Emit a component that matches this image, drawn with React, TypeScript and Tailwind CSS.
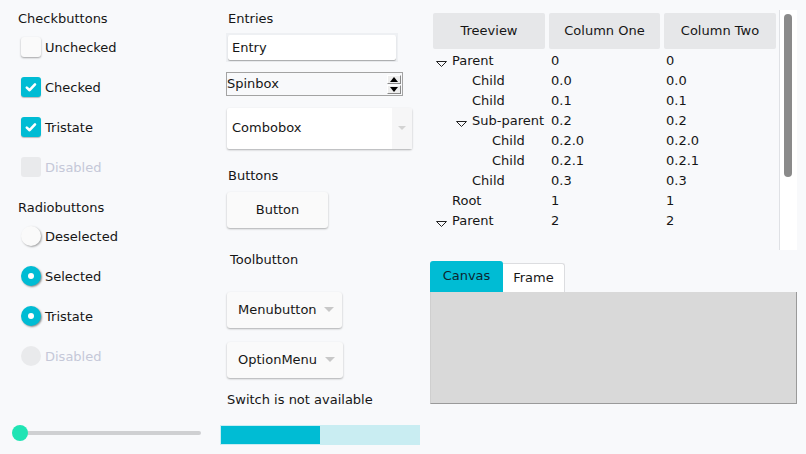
import React from "react";

const TXT = "text-[#161616]";

function CheckBox({ kind }: { kind: "off" | "on" | "dis" }) {
  if (kind === "on")
    return (
      <div className="w-5 h-5 rounded-[3px] bg-[#00bcd4] shadow-[0_1px_1px_rgba(0,0,0,0.25)] flex items-center justify-center">
        <svg width="20" height="20" viewBox="0 0 20 20">
          <path d="M5.8 10.6 L8.6 13.2 L14 7.4" fill="none" stroke="white" strokeWidth="2.6" strokeLinecap="round" strokeLinejoin="round" />
        </svg>
      </div>
    );
  if (kind === "dis") return <div className="w-5 h-5 rounded-[3px] bg-[#e9eaec]" />;
  return <div className="w-5 h-5 rounded-[3px] bg-[#fafafa] shadow-[0_1px_2px_rgba(0,0,0,0.35)]" />;
}

function Radio({ kind }: { kind: "off" | "on" | "dis" }) {
  if (kind === "on")
    return (
      <div className="w-5 h-5 rounded-full bg-[#00bcd4] shadow-[1px_1px_2px_rgba(0,0,0,0.45)] flex items-center justify-center">
        <div className="w-[6px] h-[6px] rounded-full bg-white" />
      </div>
    );
  if (kind === "dis") return <div className="w-5 h-5 rounded-full bg-[#e9eaec]" />;
  return <div className="w-5 h-5 rounded-full bg-[#fafafa] shadow-[1px_1px_2px_rgba(0,0,0,0.35)]" />;
}

function Row({ children, label, dis }: { children: React.ReactNode; label: string; dis?: boolean }) {
  return (
    <div className="h-10 flex items-center pl-[21px] gap-[4px]">
      {children}
      <span className={`pt-[1px] ${dis ? "text-[#c5c8d8]" : TXT}`}>{label}</span>
    </div>
  );
}

function DownArrow({ color = "#c8c8c8" }: { color?: string }) {
  return (
    <svg width="10" height="6" viewBox="0 0 10 6">
      <polygon points="0,0 10,0 5,5" fill={color} />
    </svg>
  );
}

function TreeArrow() {
  return (
    <svg width="17" height="20" viewBox="0 0 17 20">
      <polygon points="1.5,10.5 11.5,10.5 6.5,15.5" fill="none" stroke="#222" strokeWidth="1" />
    </svg>
  );
}

const rows = [
  { l: 0, a: true, n: "Parent", v: "0" },
  { l: 1, a: false, n: "Child", v: "0.0" },
  { l: 1, a: false, n: "Child", v: "0.1" },
  { l: 1, a: true, n: "Sub-parent", v: "0.2" },
  { l: 2, a: false, n: "Child", v: "0.2.0" },
  { l: 2, a: false, n: "Child", v: "0.2.1" },
  { l: 1, a: false, n: "Child", v: "0.3" },
  { l: 0, a: false, n: "Root", v: "1" },
  { l: 0, a: true, n: "Parent", v: "2" },
];

const indent = ["pl-[5px]", "pl-[25px]", "pl-[45px]"];

export default function App() {
  return (
    <div
      className={`w-[806px] h-[454px] bg-[#f8f9fb] flex text-[13px] leading-4 overflow-hidden ${TXT}`}
      style={{ fontFamily: "'DejaVu Sans', sans-serif" }}
    >
      {/* Column 1 */}
      <div className="w-[220px] shrink-0 flex flex-col pt-[11px]">
        <div className="h-4 pl-[18px]">Checkbuttons</div>
        <div>
          <Row label="Unchecked"><CheckBox kind="off" /></Row>
          <Row label="Checked"><CheckBox kind="on" /></Row>
          <Row label="Tristate"><CheckBox kind="on" /></Row>
          <Row label="Disabled" dis><CheckBox kind="dis" /></Row>
        </div>
        <div className="h-4 pl-[18px] mt-[13px]">Radiobuttons</div>
        <div>
          <Row label="Deselected"><Radio kind="off" /></Row>
          <Row label="Selected"><Radio kind="on" /></Row>
          <Row label="Tristate"><Radio kind="on" /></Row>
          <Row label="Disabled" dis><Radio kind="dis" /></Row>
        </div>
        <div className="mt-[49px] h-4 flex items-center pl-[12px]">
          <div className="relative w-[190px] h-4 flex items-center">
            <div className="ml-[8px] w-[181px] h-[4px] rounded-full bg-[#cfd0d2]" />
            <div className="absolute left-0 top-0 w-4 h-4 rounded-full bg-[#20e4b4]" />
          </div>
        </div>
      </div>

      {/* Column 2 */}
      <div className="w-[210px] shrink-0 flex flex-col pt-[11px]">
        <div className="h-4 pl-[8px]">Entries</div>
        <div className="mt-[6px] ml-[6px] w-[172px] h-[29px] p-[2px] bg-[#eef0f3]">
          <div className="h-[25px] bg-white rounded-[2px] shadow-[0_1px_1px_rgba(0,0,0,0.3)] flex items-center pl-[4px]">Entry</div>
        </div>
        <div className="mt-[10px] ml-[6px] w-[177px] h-[24px] border border-[#a3a3a3] bg-[#f8f9fb] flex items-center justify-between">
          <span className="pb-[1px]">Spinbox</span>
          <div className="flex flex-col gap-[1px] mr-[1px]">
            <div className="w-[14px] h-[9px] border border-t-white border-l-white border-r-[#8a8a8a] border-b-[#8a8a8a] bg-[#eeeeee] flex items-center justify-center">
              <svg width="8" height="5" viewBox="0 0 8 5"><polygon points="0,5 8,5 4,0" fill="#000" /></svg>
            </div>
            <div className="w-[14px] h-[9px] border border-t-white border-l-white border-r-[#8a8a8a] border-b-[#8a8a8a] bg-[#eeeeee] flex items-center justify-center">
              <svg width="8" height="5" viewBox="0 0 8 5"><polygon points="0,0 8,0 4,5" fill="#000" /></svg>
            </div>
          </div>
        </div>
        <div className="mt-[12px] ml-[7px] w-[185px] h-[41px] bg-white rounded-[2px] shadow-[0_1px_2px_rgba(0,0,0,0.3)] flex items-center">
          <span className="pl-[5px] pb-[1px] flex-1">Combobox</span>
          <div className="w-[20px] h-full bg-[#f6f6f7] flex items-center justify-center">
            <svg width="8" height="5" viewBox="0 0 8 5"><polygon points="0,0 8,0 4,4" fill="#d3d3d3" /></svg>
          </div>
        </div>
        <div className="h-4 pl-[8px] mt-[19px]">Buttons</div>
        <div className="mt-[8px] ml-[7px] w-[101px] h-[36px] pb-[1px] bg-[#fafafa] rounded-[3px] shadow-[0_1px_2px_rgba(0,0,0,0.3)] flex items-center justify-center">Button</div>
        <div className="h-4 pl-[10px] mt-[24px]">Toolbutton</div>
        <div className="mt-[24px] ml-[7px] w-[115px] h-[36px] pb-[1px] bg-[#fafafa] rounded-[3px] shadow-[0_1px_2px_rgba(0,0,0,0.3)] flex items-center pl-[11px] gap-[7px]">
          <span>Menubutton</span>
          <DownArrow />
        </div>
        <div className="mt-[14px] ml-[7px] w-[116px] h-[36px] pb-[1px] bg-[#fafafa] rounded-[3px] shadow-[0_1px_2px_rgba(0,0,0,0.3)] flex items-center pl-[11px] gap-[8px]">
          <span>OptionMenu</span>
          <DownArrow />
        </div>
        <div className="h-4 pl-[7px] mt-[14px]">Switch is not available</div>
        <div className="mt-[17px] w-[200px] h-[20px] bg-[#c9edf2] p-[1px] flex">
          <div className="w-[99px] h-full bg-[#00bcd4]" />
        </div>
      </div>

      {/* Column 3 */}
      <div className="flex-1 flex flex-col pt-[10px]">
        <div className="w-[367px] h-[240px] flex">
          <div className="flex-1 flex flex-col pt-[3px]">
            <div className="flex gap-[4px] pl-[3px] h-[36px]">
              <div className="w-[112px] bg-[#e6e7e9] rounded-[2px] flex items-center justify-center">Treeview</div>
              <div className="w-[111px] bg-[#e6e7e9] rounded-[2px] flex items-center justify-center">Column One</div>
              <div className="w-[112px] bg-[#e6e7e9] rounded-[2px] flex items-center justify-center">Column Two</div>
            </div>
            <div className="mt-[2px] flex flex-col">
              {rows.map((r, i) => (
                <div key={i} className="h-5 flex items-center">
                  <div className={`w-[119px] h-full flex items-center ${indent[r.l]}`}>
                    {r.a ? <TreeArrow /> : <div className="w-[17px]" />}
                    <span>{r.n}</span>
                  </div>
                  <div className="w-[115px] pl-[2px]">{r.v}</div>
                  <div className="pl-[2px]">{r.v}</div>
                </div>
              ))}
            </div>
          </div>
          <div className="w-[18px] h-full bg-white border-l border-[#dfe1e5] pt-[4px] pl-[4px]">
            <div className="w-[8px] h-[163px] rounded-full bg-[#8a8a8a]" />
          </div>
        </div>
        <div className="mt-[11px] flex items-end">
          <div className="w-[73px] h-[31px] bg-[#00bcd4] rounded-t-[3px] flex justify-center pt-[7px] text-[#0c2630]">Canvas</div>
          <div className="w-[62px] h-[29px] bg-white border-t border-r border-[#dcdde0] rounded-tr-[3px] flex justify-center pt-[6px]">Frame</div>
        </div>
        <div className="w-[367px] h-[112px] bg-[#d9d9d9] border-r border-b border-[#9a9a9a] border-l border-l-[#cfcfcf]" />
      </div>
    </div>
  );
}
